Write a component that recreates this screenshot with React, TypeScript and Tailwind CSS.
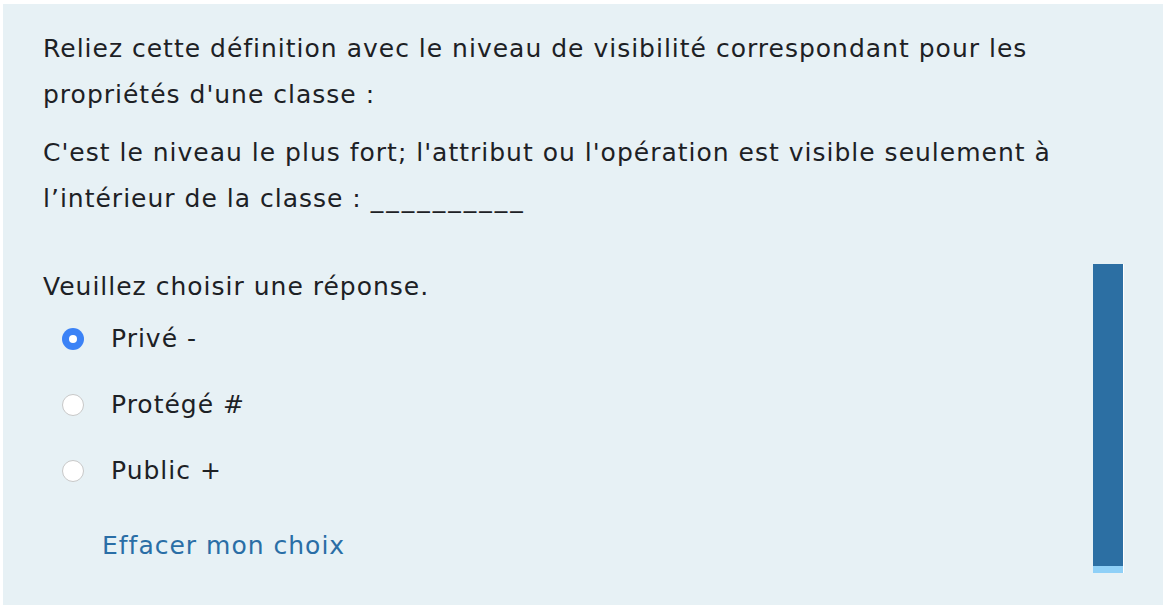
import { useState } from "react";

const options = [
  { id: "a", label: "Privé -" },
  { id: "b", label: "Protégé #" },
  { id: "c", label: "Public +" },
];

const App = () => {
  const [choice, setChoice] = useState<string | null>("a");

  return (
    <div className="w-[1166px] h-[612px] bg-white p-[3px] pt-[4px] font-['DejaVu_Sans',sans-serif] text-[#1d2125] tracking-[1px]">
      <div className="h-[601px] bg-[#e7f1f5] pl-[40px] pr-[40px] pt-[22px]">
        {/* Question text */}
        <div className="text-[25px] leading-[46px] whitespace-nowrap">
          <p>
            Reliez cette définition avec le niveau de visibilité correspondant pour les
            <br />
            propriétés d'une classe :
          </p>
          <p className="mt-[12px]">
            C'est le niveau le plus fort; l'attribut ou l'opération est visible seulement à
            <br />
            l’intérieur de la classe : <span className="tracking-[3px]">__________</span>
          </p>
        </div>

        {/* Answer area */}
        <div className="flex mt-[42px]">
          <div className="flex-1 text-[25px]">
            <p className="leading-[44px] mt-[1px]">Veuillez choisir une réponse.</p>
            <div className="mt-[8px] flex flex-col gap-[22px] pl-[19px]">
              {options.map((opt) => (
                <label key={opt.id} className="flex items-center gap-[27px] h-[44px] cursor-pointer">
                  <span
                    onClick={() => setChoice(opt.id)}
                    className={
                      choice === opt.id
                        ? "w-[22px] h-[22px] rounded-full bg-[#3b82f6] flex items-center justify-center"
                        : "w-[22px] h-[22px] rounded-full bg-white border border-[#c8c8c8]"
                    }
                  >
                    {choice === opt.id && <span className="w-[8px] h-[8px] rounded-full bg-white" />}
                  </span>
                  <span>{opt.label}</span>
                </label>
              ))}
            </div>
            <button
              onClick={() => setChoice(null)}
              className="mt-[31px] ml-[59px] text-[#2a6ea6] leading-[44px] tracking-[1px]"
            >
              Effacer mon choix
            </button>
          </div>
          <div className="w-[31px] h-[309px] mr-[-1px] flex flex-col border-r border-white">
            <div className="flex-1 bg-[#2c6fa3]" />
            <div className="h-[7px] bg-[#8fd0f7]" />
          </div>
        </div>
      </div>
    </div>
  );
};

export default App;
